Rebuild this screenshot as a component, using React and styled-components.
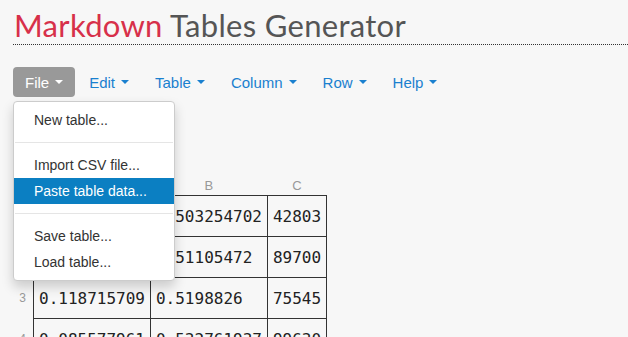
import styled, { createGlobalStyle } from "styled-components";

const Global = createGlobalStyle`
body{
  margin:0;
  background:#f7f7f7;
  font-family:"Liberation Sans", Arial, sans-serif;
  overflow:hidden;
}
`

const Page = styled.div`
padding:7px 0 0 13px;
`

const Title = styled.h1`
margin:0;
font-family:"Lato", "Noto Sans", sans-serif;
font-weight:400;
font-size:31px;
letter-spacing:0.3px;
line-height:36px;
color:#555;
padding:0 0 1px 1px;
border-bottom:1px dotted #333;
white-space:nowrap;
span{
  color:#d7304a;
}
`

const MenuBar = styled.ul`
list-style:none;
margin:22px 0 0;
padding:0;
display:flex;
align-items:center;
gap:2px;
`

const MenuItem = styled.li`
position:relative;
height:30px;
display:flex;
align-items:center;
padding:0 12px;
font-size:15px;
border-radius:4px;
cursor:pointer;
color:${p => p.$active ? "#fff" : "#1a80cf"};
background:${p => p.$active ? "#999" : "transparent"};
`

const Caret = styled.span`
display:inline-block;
width:0;
height:0;
margin-left:6px;
border-top:4px solid currentColor;
border-left:4px solid transparent;
border-right:4px solid transparent;
`

const Dropdown = styled.ul`
position:absolute;
top:34px;
left:0;
z-index:5;
width:160px;
margin:0;
padding:5px 0;
list-style:none;
background:#fff;
border:1px solid #ccc;
border-radius:4px;
box-shadow:0 6px 12px rgba(0,0,0,0.18);
`

const DropItem = styled.li`
height:26px;
line-height:26px;
padding:0 20px;
font-size:14px;
white-space:nowrap;
color:${p => p.$hover ? "#fff" : "#333"};
background:${p => p.$hover ? "#0b7fc2" : "transparent"};
`

const Divider = styled.li`
height:1px;
margin:9px 1px;
background:#e5e5e5;
`

const Sheet = styled.table`
margin-top:78px;
border-collapse:collapse;
`

const Label = styled.th`
font-weight:400;
font-size:13px;
color:#999;
height:20px;
text-align:center;
padding:0;
`

const RowNum = styled.td`
width:13px;
padding:0 7px 0 0;
text-align:right;
font-size:12px;
color:#999;
`

const Cell = styled.td`
height:40px;
padding:0 5px;
border:1px solid #333;
font-family:"DejaVu Sans Mono", "Liberation Mono", monospace;
font-size:16px;
color:#222;
white-space:nowrap;
`

const rows = [
  ["0.275301864", "0.503254702", "42803"],
  ["0.641190273", "0.51105472", "89700"],
  ["0.118715709", "0.5198826", "75545"],
  ["0.085577961", "0.532761937", "99630"],
]

const App = () => {
  return (
    <Page>
      <Global />
      <Title><span>Markdown</span> Tables Generator</Title>
      <MenuBar>
        <MenuItem $active>
          File<Caret />
          <Dropdown>
            <DropItem>New table...</DropItem>
            <Divider />
            <DropItem>Import CSV file...</DropItem>
            <DropItem $hover>Paste table data...</DropItem>
            <Divider />
            <DropItem>Save table...</DropItem>
            <DropItem>Load table...</DropItem>
          </Dropdown>
        </MenuItem>
        <MenuItem>Edit<Caret /></MenuItem>
        <MenuItem>Table<Caret /></MenuItem>
        <MenuItem>Column<Caret /></MenuItem>
        <MenuItem>Row<Caret /></MenuItem>
        <MenuItem>Help<Caret /></MenuItem>
      </MenuBar>
      <Sheet>
        <thead>
          <tr>
            <Label />
            <Label>A</Label>
            <Label>B</Label>
            <Label>C</Label>
          </tr>
        </thead>
        <tbody>
          {rows.map((r, i) => (
            <tr key={i}>
              <RowNum>{i + 1}</RowNum>
              {r.map((v, j) => <Cell key={j}>{v}</Cell>)}
            </tr>
          ))}
        </tbody>
      </Sheet>
    </Page>
  )
}

export default App;
